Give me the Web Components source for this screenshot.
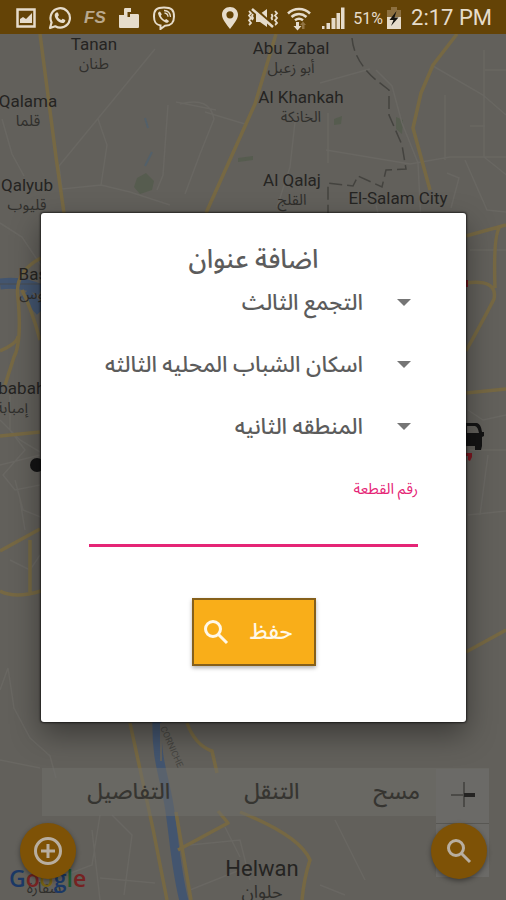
<!DOCTYPE html>
<html lang="ar">
<head>
<meta charset="utf-8">
<meta name="viewport" content="width=device-width, initial-scale=1">
<title>اضافة عنوان</title>
<style>
  :root {
    --font-ui: Roboto, "Noto Sans Arabic", "DejaVu Sans", sans-serif;
    --color-map: #62605b;
    --color-bar: #644306;
    --color-status: #e6dccb;
    --color-amber: #f9ae19;
    --color-amber-dim: #7e5206;
    --color-pink: #e52576;
    --color-text: #5c5c5c;
  }

  body {
    margin: 0;
    font-family: var(--font-ui);
    background: var(--color-map);
  }
</style>
</head>
<body>
<address-screen></address-screen>

<script>
class StatusBar extends HTMLElement {
  connectedCallback() {
    this.attachShadow({ mode: "open" });
    this.shadowRoot.innerHTML = `
      <div class="group group--notes">
        <svg width="20" height="22" viewBox="0 0 20 22">
          <path d="M1.500 2.500h17v17h-17z" fill="none" stroke="currentColor" stroke-width="2.500"/>
          <path d="M4 16v-4l3-2 3 2 6-6v10z" fill="currentColor"/>
        </svg>
        <svg width="24" height="24" viewBox="0 0 24 24">
          <path d="M2 22l1.600-5.600A9.700 9.700 0 1 1 7.300 20.300z" fill="none" stroke="currentColor" stroke-width="2.200" stroke-linejoin="round"/>
          <path d="M8.300 6.500l1.600.1 1 2.700-1.100 1.400c.8 1.700 1.900 2.600 3.600 3.400l1.300-1.400 2.600 1.200c.2 2-1.200 3.100-2.900 3.100-3.700-.3-7.500-4-7.700-7.500 0-1.300.6-2.300 1.600-3z" fill="currentColor"/>
        </svg>
        <span class="fs">FS</span>
        <svg width="22" height="24" viewBox="0 0 22 24">
          <path d="M1 9h5V3.500C6 2.500 6.500 2 7.500 2H13v4H9.500v5H12V8h7.500c1 0 1.500.5 1.500 1.500v11c0 1-.5 1.500-1.500 1.500h-17C1.500 22 1 21.500 1 20.500z" fill="currentColor"/>
        </svg>
        <svg width="24" height="24" viewBox="0 0 24 24">
          <path d="M12 1.500c7.500 0 10 2.500 10 9s-2.500 9-9 9.200L8.500 23v-3.600C3.500 18.600 2 16 2 10.500c0-6.500 2.500-9 10-9z" fill="none" stroke="currentColor" stroke-width="2"/>
          <path d="M8 5.500l1.800 2.800-1 1.500c.8 2 2 3.200 4 4.200l1.500-1 2.700 2c-.6 1.500-1.600 2.200-3 1.700C9.700 15 7 11.500 6 7.500c0-1 1-2 2-2z" fill="currentColor"/>
          <path d="M12 4.500c4.300.2 6.300 2.300 6.500 6.500M12.500 7c2.300.2 3.400 1.400 3.500 3.700" fill="none" stroke="currentColor" stroke-width="1.300"/>
        </svg>
      </div>
      <div class="group group--system">
        <svg width="18" height="24" viewBox="0 0 18 24">
          <path fill-rule="evenodd" d="M9 1c4.600 0 8 3.300 8 7.700C17 13.500 12.500 18 9 23 5.500 18 1 13.500 1 8.700 1 4.300 4.400 1 9 1zm0 4.200a3.600 3.600 0 1 0 0 7.200 3.600 3.600 0 0 0 0-7.200z" fill="currentColor"/>
        </svg>
        <svg class="mute" width="34" height="24" viewBox="0 0 34 24">
          <path d="M10 8h4l7-5v18l-7-5h-4z" fill="currentColor"/>
          <path d="M3 5l2 2.300L3 9.500 5 12l-2 2.300L5 17l-2 2M7 8l-1 2 1 2-1 2M29 5l2 2.300-2 2.200 2 2.500-2 2.300 2 2.700-2 2M25.500 8l1 2-1 2 1 2" fill="none" stroke="currentColor" stroke-width="1.800"/>
          <path d="M7 1l21 19" stroke="#644306" stroke-width="3"/>
          <path d="M6 3l21 18" stroke="currentColor" stroke-width="2.500"/>
        </svg>
        <svg width="24" height="26" viewBox="0 0 24 26">
          <path d="M1 8.500c6-6 16-6 22 0M4.500 12c4.500-4 10.500-4 15 0M8 15.300c2.500-2 5.500-2 8 0" fill="none" stroke="currentColor" stroke-width="2.500"/>
          <path d="M9 17h3v4h2.500L10.500 25.500 6.500 21H9z" fill="currentColor"/>
          <path d="M15 24v-4h-2l3-3.500 3 3.500h-1.500v4z" fill="#927443"/>
        </svg>
        <svg class="signal" width="24" height="24" viewBox="0 0 24 24">
          <path d="M1 20h2.500v3H1zM5.500 17H9v6H5.500zM10.500 12h4v11h-4zM15.500 7h3.500v16h-3.500zM20 1.500H23.500V23H20z" fill="currentColor"/>
        </svg>
        <span class="percent">51%</span>
        <svg class="battery" width="16" height="24" viewBox="0 0 16 24">
          <path d="M1 4h4V1h6v3h4v8H1z" fill="#8d7040"/>
          <path d="M1 11h14v12H1z" fill="currentColor"/>
          <path d="M10.500 5L3.500 14h4L5 20l7.500-8.500h-4z" fill="#15130e"/>
        </svg>
        <time>2:17 PM</time>
      </div>

      <style>
        :host {
          display: flex;
          align-items: center;
          justify-content: space-between;
          height: 34px;
          padding: 2px 14px 0 16px;
          box-sizing: border-box;
          direction: ltr;
          color: var(--color-status);
          background: var(--color-bar);
        }

        .group {
          display: flex;
          align-items: center;
        }

        .group--notes {
          gap: 12px;
        }

        .fs {
          width: 22px;
          font: italic 700 17px/24px "Liberation Sans", sans-serif;
          color: #b9a88d;
        }

        .mute {
          margin: 0 7px 0 7px;
        }

        .signal {
          margin: 0 8px 0 10px;
        }

        .percent {
          font-size: 16px;
        }

        .battery {
          margin: 0 9px 0 3px;
        }

        time {
          font-size: 22px;
          line-height: 28px;
        }
      </style>
    `;
  }
}

// A place name on the map, centred on its x; the Arabic name is slotted in.
class MapPlace extends HTMLElement {
  connectedCallback() {
    this.style.left = `${this.getAttribute("x")}px`;
    this.style.top = `${this.getAttribute("y")}px`;
    this.attachShadow({ mode: "open" });
    this.shadowRoot.innerHTML = `
      <span class="name">${this.getAttribute("name") || ""}</span>
      <span class="local" lang="ar" dir="rtl"><slot></slot></span>

      <style>
        :host {
          position: absolute;
          display: flex;
          flex-direction: column;
          align-items: center;
          transform: translateX(-50%);
          white-space: nowrap;
          color: #252422;
        }

        .name {
          font-size: 17px;
          line-height: 20px;
        }

        .local {
          font-size: 15px;
          line-height: 20px;
          color: #302f2c;
        }

        :host([size="large"]) .name {
          font-size: 22px;
          line-height: 24px;
        }

        :host([size="large"]) .local {
          font-size: 18px;
          line-height: 22px;
        }
      </style>
    `;
  }
}

class CityMap extends HTMLElement {
  connectedCallback() {
    this.attachShadow({ mode: "open" });
    this.shadowRoot.innerHTML = `
      <svg class="roads" viewBox="0 34 506 866" preserveAspectRatio="xMidYMin slice" aria-hidden="true">
        <g fill="#565c4f">
          <path d="M137 178l9-5 8 8-2 9-12 4-6-7zM334 119l8-3-1 8-7 1zM396 117l7 3-1 14-6-5zM238 158l15-2v4l-15 2z"/>
          <path d="M145 118l3 10M152 152l-7 14" stroke="#53606a" stroke-width="2"/>
        </g>
        <g class="minor">
          <path d="M155 49L59 166l3 23 39-4 6-40-9-26M101 185l29 7 40 13M2 119l10 35 12 22M180 104q30-8 34 15l-14 35-15 40M168 105l-5 70-6 15M205 112l40 12M176 102l40 8M295 122l-5 45-13 40M326 150l84 14 40-7h56M328 113v50M376 70l16 16 10 37 16 40 3 60M320 83l50-14M433 66l50 29 23 20M484 50v107l25 20M485 70h21M445 95v65M470 126h15M465 160l22 50 30 3M447 173l12 5-8 30M376 205l5 20"/>
          <path d="M0 223l22 14 20 30M10 395v35l15 20-22 25 12 15 25-5M0 465l40-10M10 560l20 10 10-15M0 420l20 20 20 12M15 480l8 30 20 8M20 500l5 30M0 690l8-22 6 40 16 30 20 18 6 22"/>
          <path d="M468 410l15 10 23-5M470 450h36M488 455l-8 60M468 515l38-4M470 250h36M52 880l40-15 8-50M92 830l8 70M112 815l20 20-8 60M100 878l55 5M190 845l50-5 10 40M225 827l15 30M0 760l40 8M190 890l50-20M320 885l25 10M335 820l30 60"/>
        </g>
        <g class="water">
          <path d="M0 284q22-3 41 6M25 293l16 18" stroke-width="11"/>
          <path d="M0 284h41" stroke="#494d50" stroke-width="1"/>
          <path d="M157 720c-1 40 7 55 12 85s6 60 15 96" stroke-width="9"/>
          <path d="M161 723v38" stroke="#62605b" stroke-width="2"/>
        </g>
        <g class="major">
          <path d="M40 34l16 123 8 56M276 34l-21 70-49 109M457 34l-24 31-12 28-8 35 17 62"/>
          <path d="M41 258q-27 14-23 40 4 44-4 59l-9 28M0 351q18-8 18-15M22 290q10 20 18 50M466 236l40-11M501 226q-8 5-6 62M466 283q32-4 28 16-7 14-28 52M466 393l40-4"/>
          <path d="M0 551l40-22M30 540v52M0 591q15 8 41 0M0 436l40-4M466 652l40-22M130 723l10 46 13 60 14 71M187 723q8 22 25 28l5 22M176 812l15 88M178 850l50-27-10-12M240 812q60 24 70 48-6 18-8 40"/>
        </g>
        <path class="border-line" d="M352 38q2 23 24 42l13 10v25l13 30 4 24-20 1-4 17-24-11-5 10-25-3v40"/>
        <g fill="#141414">
          <circle cx="37" cy="465" r="7"/>
          <path fill-rule="evenodd" d="M465 423h12q4 1 5 9h2v4l-2 1v9l-1 4h-6v-4h-10zm2 3v7h12q-1-6-4-7z"/>
        </g>
        <path d="M466 453h6v4l-2 4-2-1v-4h-2zM466 280h2v7h-2z" fill="#7c1720"/>
        <text class="road-name" transform="translate(160 728) rotate(66)">CORNICHE</text>
      </svg>

      <map-place x="94" y="34" name="Tanan">طنان</map-place>
      <map-place x="291" y="38" name="Abu Zabal">أبو زعبل</map-place>
      <map-place x="28" y="91" name="Qalama">قلما</map-place>
      <map-place x="301" y="87" name="Al Khankah">الخانكة</map-place>
      <map-place x="27" y="175" name="Qalyub">قليوب</map-place>
      <map-place x="292" y="170" name="Al Qalaj">القلج</map-place>
      <map-place x="398" y="188" name="El-Salam City"></map-place>
      <map-place x="42" y="264" name="Basus">باسوس</map-place>
      <map-place x="12" y="378" name="Imbabah">إمبابة</map-place>
      <map-place x="262" y="857" name="Helwan" size="large">حلوان</map-place>
      <map-place x="44" y="858">سقارة</map-place>

      <style>
        :host {
          display: block;
          position: relative;
          overflow: hidden;
          direction: ltr;
          background: var(--color-map);
        }

        map-place {
          margin-top: -34px;
        }

        .roads {
          display: block;
          width: 100%;
          height: 100%;
        }

        .minor {
          fill: none;
          stroke: #696762;
          stroke-width: 1.5;
        }

        .major {
          fill: none;
          stroke: #766843;
          stroke-width: 3.5;
          stroke-linejoin: round;
        }

        .water {
          fill: none;
          stroke: #43556f;
        }

        .border-line {
          fill: none;
          stroke: #44433f;
          stroke-width: 1.5;
          stroke-dasharray: 13 5;
        }

        .road-name {
          font-size: 9px;
          fill: #454440;
        }

        /* the Latin line of this place is empty, keep its height */
        map-place:last-of-type {
          padding-top: 20px;
        }
      </style>
    `;
  }
}

class RoundButton extends HTMLElement {
  connectedCallback() {
    this.attachShadow({ mode: "open" });
    this.shadowRoot.innerHTML = `
      <button type="button" aria-label="${this.getAttribute("label") || ""}">
        <slot></slot>
      </button>

      <style>
        :host {
          display: block;
        }

        button {
          display: grid;
          place-items: center;
          width: 56px;
          height: 56px;
          padding: 0;
          border: 0;
          border-radius: 50%;
          color: #b8aea0;
          background: var(--color-amber-dim);
          box-shadow: 0 2px 5px rgba(0, 0, 0, 0.4);
          cursor: pointer;
        }
      </style>
    `;
  }
}

class MapControls extends HTMLElement {
  connectedCallback() {
    this.attachShadow({ mode: "open" });
    this.shadowRoot.innerHTML = `
      <div class="logo" aria-label="Google"><span class="b">G</span><span class="r">o</span><span class="y">o</span><span class="b">g</span><span class="g">l</span><span class="r">e</span></div>
      <nav>
        <button type="button">التفاصيل</button>
        <button type="button">التنقل</button>
        <button type="button">مسح</button>
      </nav>
      <div class="zoom">
        <button type="button" aria-label="تكبير">
          <svg width="24" height="28" viewBox="0 0 24 28">
            <path d="M0 14h13M13 1v25" stroke="#4b4a47" stroke-width="2"/>
            <path d="M13 14h11" stroke="#242322" stroke-width="4"/>
          </svg>
        </button>
        <button type="button" aria-label="تصغير"></button>
      </div>
      <div class="actions">
        <round-button label="اضافة">
          <svg width="30" height="30" viewBox="0 0 30 30" fill="none" stroke="currentColor" stroke-width="3">
            <circle cx="15" cy="15" r="12.500"/>
            <path d="M15 8v14M8 15h14"/>
          </svg>
        </round-button>
        <round-button label="بحث">
          <svg width="26" height="26" viewBox="0 0 26 26" fill="none" stroke="currentColor" stroke-width="3">
            <circle cx="10" cy="10" r="7.500"/>
            <path d="M15.500 15.500l8.500 8.500"/>
          </svg>
        </round-button>
      </div>

      <style>
        :host {
          display: flex;
          flex-direction: column;
          justify-content: flex-end;
          position: relative;
          direction: ltr;
        }

        nav {
          display: flex;
          justify-content: flex-end;
          gap: 74px;
          height: 48px;
          margin: 0 17px 7px 42px;
          padding-right: 69px;
          background: rgba(112, 111, 107, 0.5);
        }

        nav button {
          padding: 0;
          border: 0;
          font: 500 22px/44px var(--font-ui);
          color: #363531;
          background: none;
        }

        .actions {
          display: flex;
          justify-content: space-between;
          padding: 0 19px 21px 20px;
          z-index: 1;
        }

        .zoom {
          position: absolute;
          right: 17px;
          bottom: 23px;
          display: grid;
          grid-template-rows: 1fr 1fr;
          width: 53px;
          height: 108px;
          background: #6b6a67;
        }

        .zoom button {
          padding: 0;
          border: 0;
          background: none;
        }

        .zoom button + button {
          border-top: 1px solid #585753;
        }

        .logo {
          position: absolute;
          left: 9px;
          bottom: 6px;
          font: 600 23px/32px "Open Sans", sans-serif;
        }

        .b { color: #1b3865; }
        .r { color: #762222; }
        .y { color: #766014; }
        .g { color: #1c5930; }
      </style>
    `;
  }
}

// Borderless drop-down: options come in the "options" attribute, split by "|".
class PlaceSelect extends HTMLElement {
  connectedCallback() {
    const options = (this.getAttribute("options") || "").split("|");

    this.attachShadow({ mode: "open" });
    this.shadowRoot.innerHTML = `
      <select dir="rtl" aria-label="${this.getAttribute("label") || ""}">
        ${options.map((option) => `<option>${option}</option>`).join("")}
      </select>
      <svg width="14" height="8" viewBox="0 0 14 8"><path d="M0 0h14L7 7z" fill="#757575"/></svg>

      <style>
        :host {
          display: grid;
          align-items: center;
          height: 62px;
          direction: ltr;
        }

        select,
        svg {
          grid-area: 1 / 1;
        }

        select {
          width: 100%;
          height: 48px;
          padding: 0 55px 0 0;
          border: 0;
          appearance: none;
          font: 500 22px/32px var(--font-ui);
          color: var(--color-text);
          background: none;
        }

        svg {
          justify-self: end;
          margin-right: 7px;
          pointer-events: none;
        }
      </style>
    `;
  }
}

class PlotField extends HTMLElement {
  connectedCallback() {
    this.attachShadow({ mode: "open" });
    this.shadowRoot.innerHTML = `
      <label for="plot"><slot></slot></label>
      <input id="plot" type="text" inputmode="numeric">

      <style>
        :host {
          display: flex;
          flex-direction: column;
          margin-top: 20px;
        }

        label {
          font-size: 15px;
          line-height: 22px;
          color: var(--color-pink);
        }

        input {
          height: 47px;
          padding: 0;
          border: 0;
          border-bottom: 3px solid var(--color-pink);
          box-sizing: border-box;
          outline: 0;
          font: 22px/32px var(--font-ui);
          background: none;
        }
      </style>
    `;
  }
}

class AddressDialog extends HTMLElement {
  connectedCallback() {
    this.attachShadow({ mode: "open" });
    this.shadowRoot.innerHTML = `
      <form role="dialog" aria-labelledby="title">
        <h1 id="title">اضافة عنوان</h1>
        <place-select label="المدينة" options="التجمع الثالث"></place-select>
        <place-select label="الحي" options="اسكان الشباب المحليه الثالثه"></place-select>
        <place-select label="المنطقه" options="المنطقه الثانيه"></place-select>
        <plot-field>رقم القطعة</plot-field>
        <button type="button">
          <svg width="28" height="28" viewBox="0 0 28 28" fill="none" stroke="currentColor" stroke-width="3">
            <circle cx="11" cy="11" r="7.500"/>
            <path d="M16.500 16.500l8.500 8.500"/>
          </svg>
          <span>حفظ</span>
        </button>
      </form>

      <style>
        :host {
          display: grid;
          align-items: center;
          padding: 0 40px 0 41px;
        }

        form {
          display: flex;
          flex-direction: column;
          padding: 33px 48px 56px;
          direction: rtl;
          background: #fff;
          border-radius: 3px;
          box-shadow: 0 0 2px 1px rgba(0, 0, 0, 0.6), 0 12px 30px rgba(0, 0, 0, 0.4);
        }

        h1 {
          margin: 0;
          font-size: 26px;
          font-weight: 500;
          line-height: 26px;
          text-align: center;
          color: var(--color-text);
        }

        button {
          display: flex;
          align-items: center;
          justify-content: space-between;
          align-self: center;
          width: 124px;
          height: 68px;
          margin-top: 51px;
          padding: 0 21px 0 8px;
          direction: ltr;
          border: 2px solid #86601a;
          font: 500 22px/32px var(--font-ui);
          color: #fff8e8;
          background: var(--color-amber);
          box-shadow: 0 2px 4px rgba(0, 0, 0, 0.3);
          cursor: pointer;
        }
      </style>
    `;
  }
}

class AddressScreen extends HTMLElement {
  connectedCallback() {
    this.attachShadow({ mode: "open" });
    this.shadowRoot.innerHTML = `
      <status-bar></status-bar>
      <main>
        <city-map></city-map>
        <map-controls></map-controls>
        <address-dialog></address-dialog>
      </main>

      <style>
        :host {
          display: grid;
          grid-template-rows: auto 1fr;
          min-height: 100vh;
        }

        main {
          display: grid;
          grid-template: minmax(0, 1fr) / minmax(0, 1fr);
        }

        main > * {
          grid-area: 1 / 1;
        }

        address-dialog {
          z-index: 1;
        }
      </style>
    `;
  }
}

customElements.define("status-bar", StatusBar);
customElements.define("map-place", MapPlace);
customElements.define("city-map", CityMap);
customElements.define("round-button", RoundButton);
customElements.define("map-controls", MapControls);
customElements.define("place-select", PlaceSelect);
customElements.define("plot-field", PlotField);
customElements.define("address-dialog", AddressDialog);
customElements.define("address-screen", AddressScreen);
</script>
</body>
</html>
